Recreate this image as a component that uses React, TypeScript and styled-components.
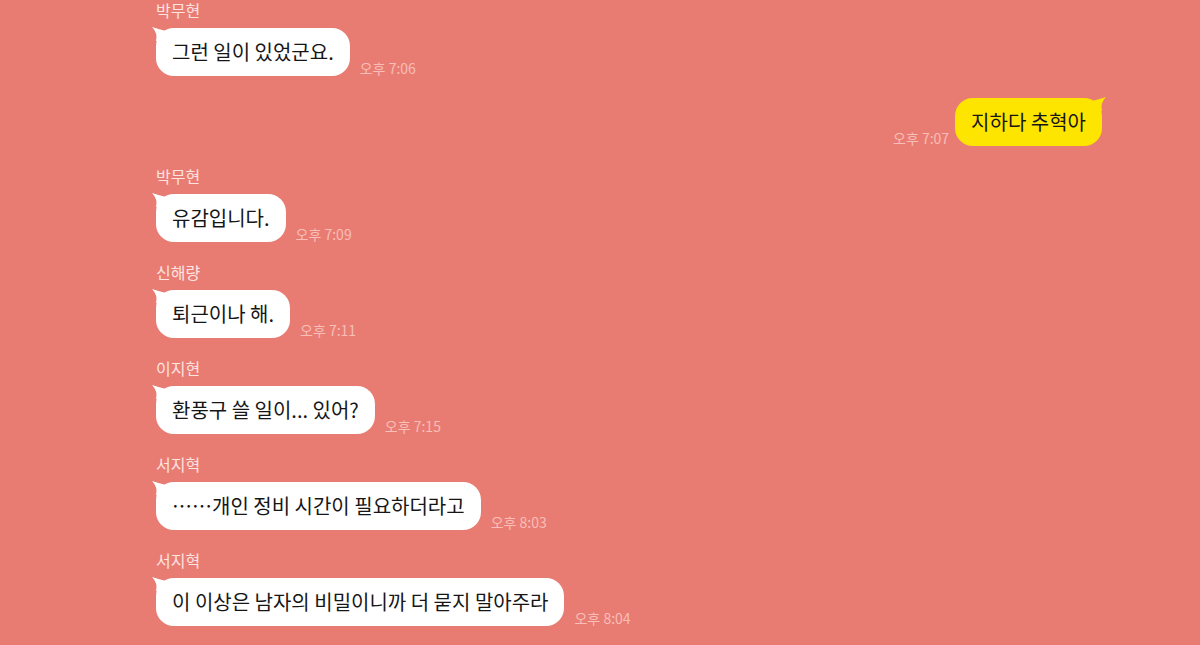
import React from "react";
import styled, { createGlobalStyle } from "styled-components";

const GlobalStyle = createGlobalStyle`
  html, body {
    margin: 0;
    padding: 0;
    background: #e97c72;
  }
  body {
    font-family: "Noto Sans CJK KR", "Noto Sans", sans-serif;
  }
`;

type Msg = {
  name?: string;
  text: string;
  time: string;
  mine?: boolean;
};

const messages: Msg[] = [
  { name: "박무현", text: "그런 일이 있었군요.", time: "오후 7:06" },
  { text: "지하다 추혁아", time: "오후 7:07", mine: true },
  { name: "박무현", text: "유감입니다.", time: "오후 7:09" },
  { name: "신해량", text: "퇴근이나 해.", time: "오후 7:11" },
  { name: "이지현", text: "환풍구 쓸 일이... 있어?", time: "오후 7:15" },
  { name: "서지혁", text: "……개인 정비 시간이 필요하더라고", time: "오후 8:03" },
  { name: "서지혁", text: "이 이상은 남자의 비밀이니까 더 묻지 말아주라", time: "오후 8:04" },
];

const Screen = styled.div`
  width: 1200px;
  height: 645px;
  overflow: hidden;
  background: #e97c72;
  box-sizing: border-box;
  padding: 0 98px 0 156px;
  display: flex;
  flex-direction: column;
  gap: 20px;
`;

const Group = styled.div<{ $mine?: boolean }>`
  display: flex;
  flex-direction: column;
  align-items: ${(p) => (p.$mine ? "flex-end" : "flex-start")};
  margin-top: ${(p) => (p.$mine ? "2px" : "0")};
`;

const Name = styled.div`
  font-size: 16px;
  line-height: 20px;
  color: #fde4e1;
  margin-bottom: 8px;
`;

const Row = styled.div<{ $mine?: boolean }>`
  display: flex;
  flex-direction: ${(p) => (p.$mine ? "row-reverse" : "row")};
  align-items: flex-end;
  gap: ${(p) => (p.$mine ? "6px" : "10px")};
`;

const Bubble = styled.div<{ $mine?: boolean }>`
  position: relative;
  background: ${(p) => (p.$mine ? "#fee500" : "#ffffff")};
  color: #161616;
  border-radius: 18px;
  padding: 12px 16px;
  font-size: 20px;
  line-height: 24px;
  white-space: nowrap;

  &::before {
    content: "";
    position: absolute;
    top: -1px;
    width: 14px;
    height: 14px;
    background: inherit;
    ${(p) =>
      p.$mine
        ? `right: -4px; clip-path: path('M14 0 Q8 2 0 4 L0 14 L10 14 Q8 6 14 0 Z');`
        : `left: -4px; clip-path: path('M0 0 Q6 2 14 4 L14 14 L4 14 Q6 6 0 0 Z');`}
  }
`;

const Time = styled.span`
  font-size: 14px;
  line-height: 14px;
  color: #f8beb8;
  white-space: nowrap;
  margin-bottom: 1px;
`;

export default function App() {
  return (
    <>
      <GlobalStyle />
      <Screen>
        {messages.map((m, i) => (
          <Group key={i} $mine={m.mine}>
            {m.name && <Name>{m.name}</Name>}
            <Row $mine={m.mine}>
              <Bubble $mine={m.mine}>{m.text}</Bubble>
              <Time>{m.time}</Time>
            </Row>
          </Group>
        ))}
      </Screen>
    </>
  );
}
